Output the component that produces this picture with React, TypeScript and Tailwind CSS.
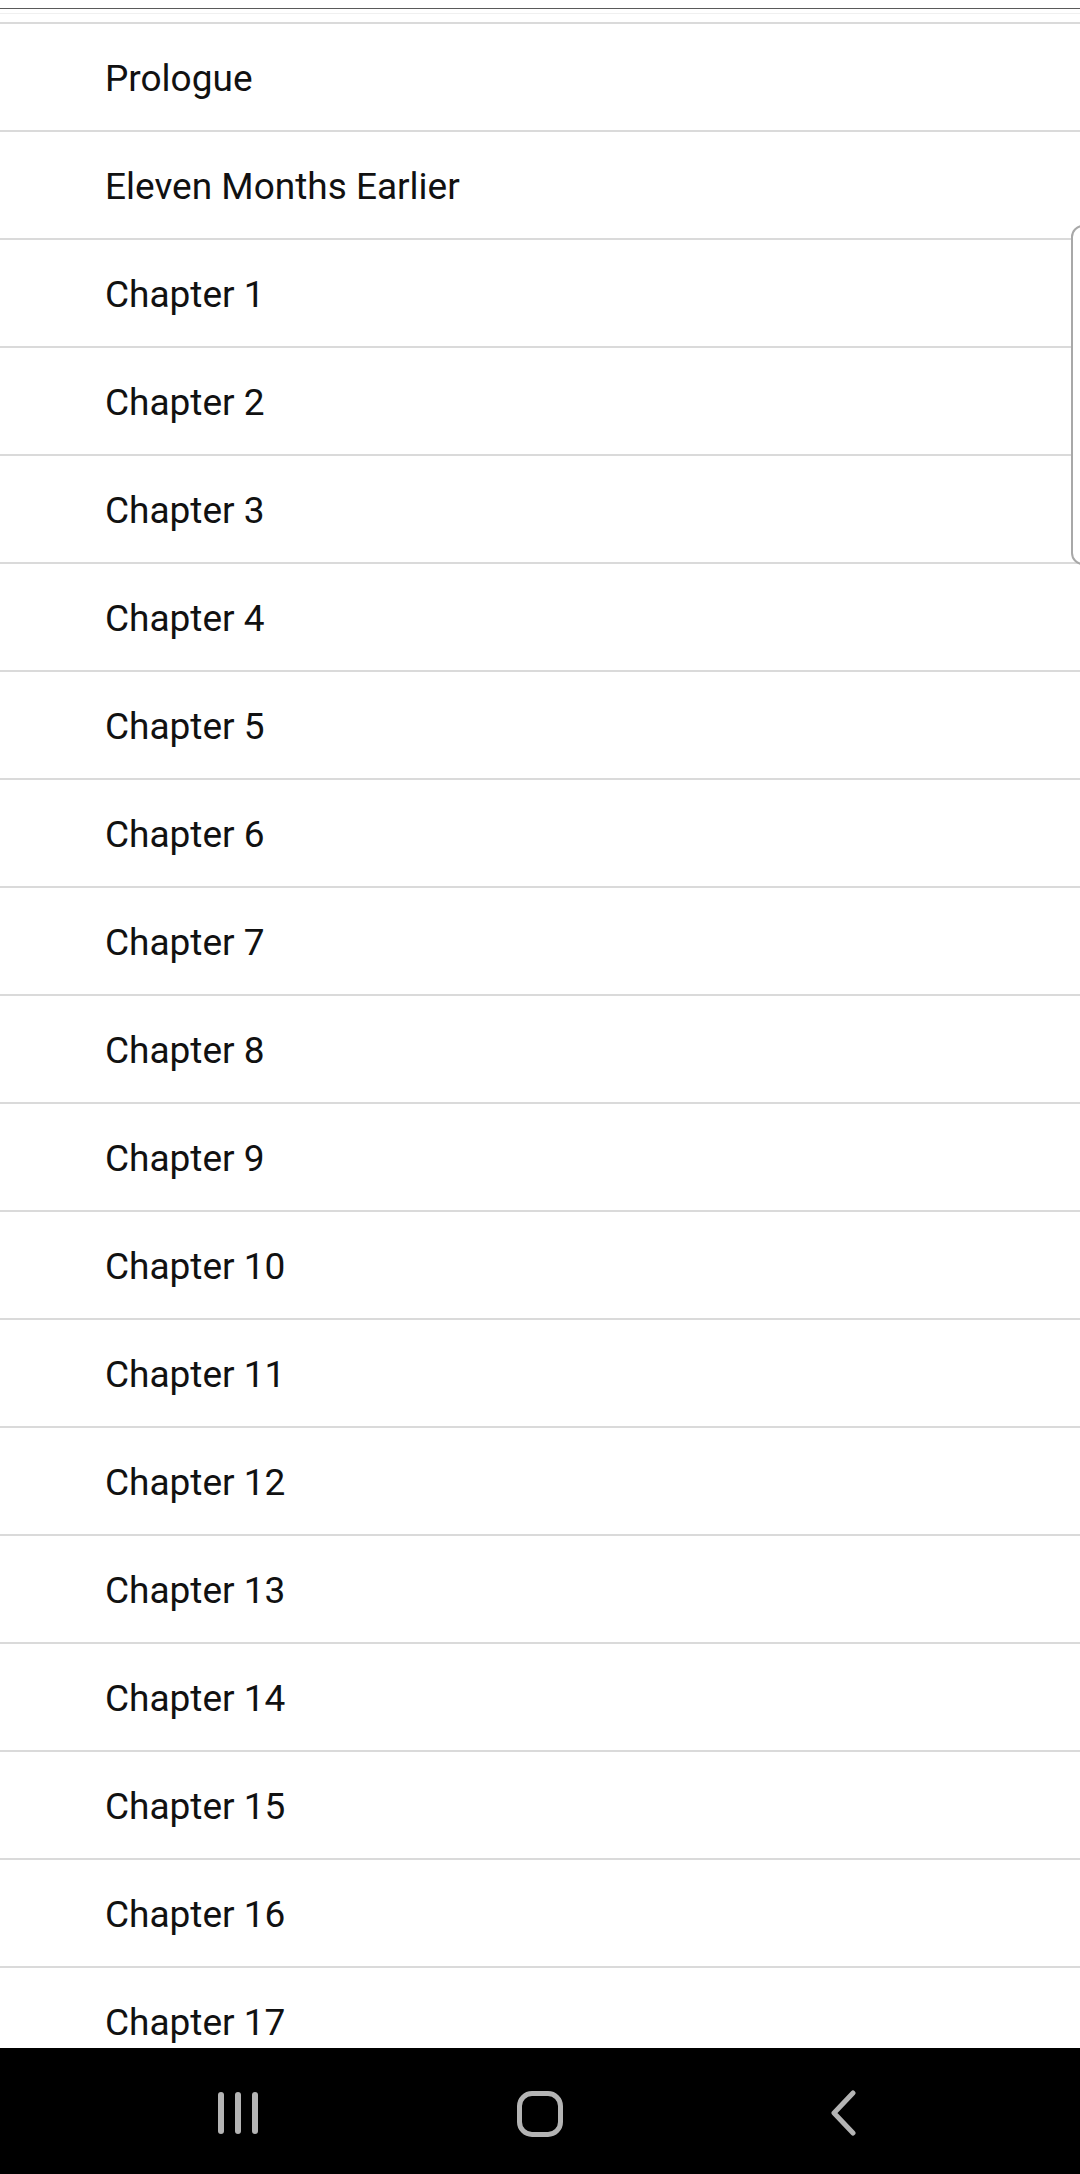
import React from "react";

const items = [
  "Prologue",
  "Eleven Months Earlier",
  ...Array.from({ length: 17 }, (_, i) => `Chapter ${i + 1}`),
];

export default function App() {
  return (
    <div className="relative w-[1080px] h-[2174px] overflow-hidden bg-white" style={{ fontFamily: "Roboto, 'Noto Sans', sans-serif" }}>
      <div className="h-[8px]" />
      <div className="h-px bg-[#5a5a5a]" />
      <div className="h-[4px]" />
      <div className="h-px bg-[#f0f0f0]" />
      <div className="h-[8px]" />
      <div className="flex flex-col">
        {items.map((t) => (
          <div key={t} className="h-[108px] border-t-2 border-[#dadada] flex items-center pl-[105px] pt-[3px]">
            <span className="text-[37px] text-[#111] leading-none">{t}</span>
          </div>
        ))}
      </div>
      {/* scroll thumb */}
      <div className="absolute left-[1071px] top-[225px] w-[30px] h-[340px] bg-white border-2 border-[#a8a8a8] rounded-[12px]" />
      {/* nav bar */}
      <div className="absolute left-0 right-0 top-[2048px] h-[126px] bg-black flex items-center">
        <div className="absolute left-[218px] top-[44px] flex gap-[11px]">
          <div className="w-[6px] h-[42px] rounded-full bg-[#b4b4b4]" />
          <div className="w-[6px] h-[42px] rounded-full bg-[#b4b4b4]" />
          <div className="w-[6px] h-[42px] rounded-full bg-[#b4b4b4]" />
        </div>
        <div className="absolute left-[517px] top-[43px] w-[46px] h-[46px] rounded-[15px] border-[5px] border-[#b4b4b4]" />
        <svg className="absolute left-[828px] top-[42px]" width="30" height="46" viewBox="0 0 30 46">
          <path d="M25 3 L6 23 L25 43" fill="none" stroke="#b4b4b4" strokeWidth="5" strokeLinecap="round" strokeLinejoin="round" />
        </svg>
      </div>
    </div>
  );
}
